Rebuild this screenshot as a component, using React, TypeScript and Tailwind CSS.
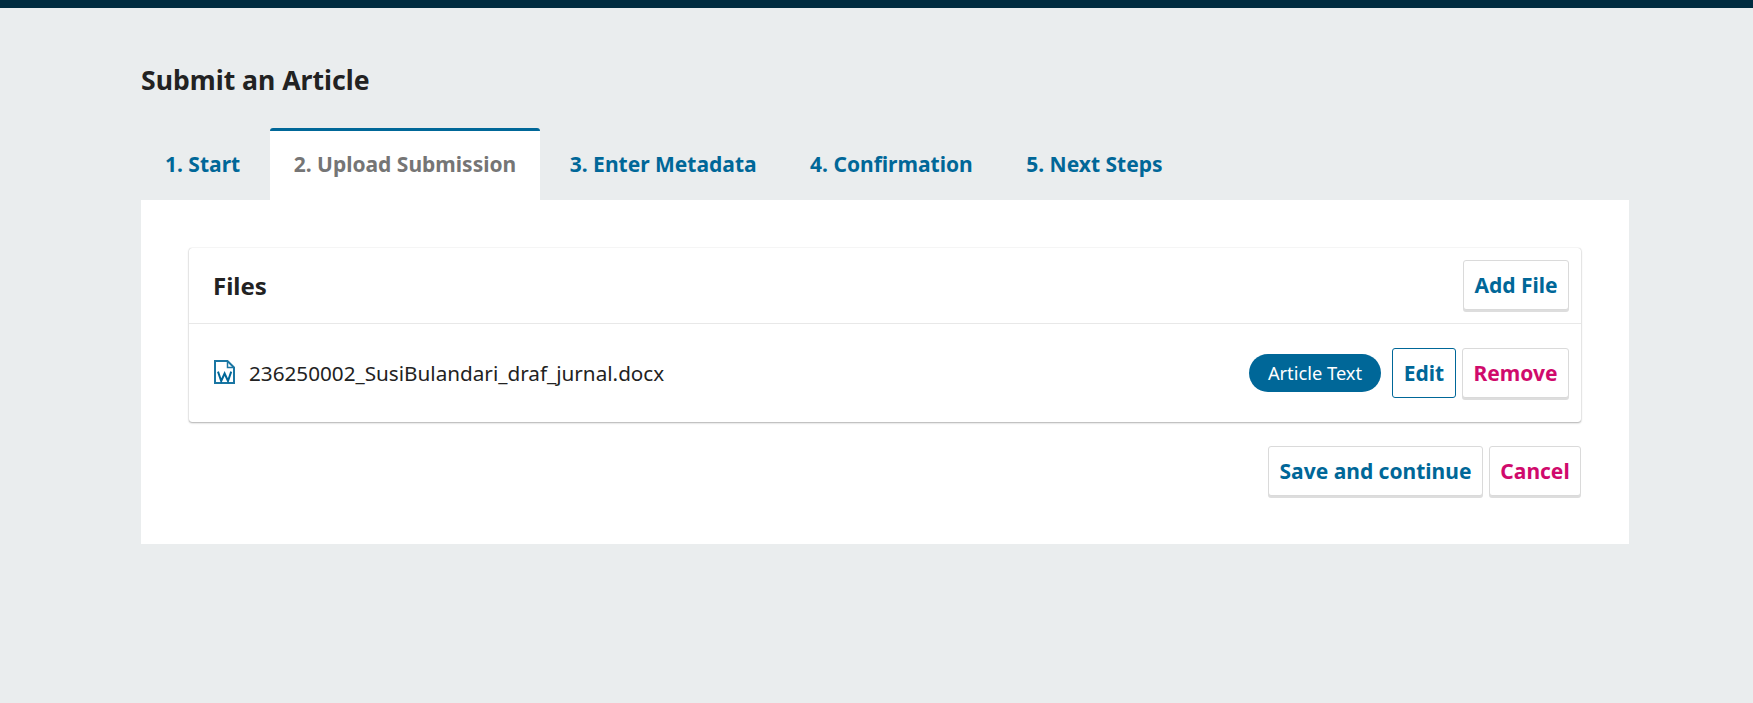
const font = { fontFamily: '"Noto Sans", sans-serif' };

function Tab({ label, active }: { label: string; active?: boolean }) {
  return (
    <div
      className={
        active
          ? "flex h-[72px] items-center rounded-t-[3px] border-t-[3px] border-[#006798] bg-white px-[24px] pb-[3px] text-[21px] leading-none font-bold text-[#757575]"
          : "flex h-[72px] items-center px-[24px] text-[21px] leading-none font-bold text-[#006798]"
      }
    >
      {label}
    </div>
  );
}

function Btn({ label, color, className }: { label: string; color: string; className: string }) {
  return (
    <button
      className={`flex h-[50px] items-center justify-center rounded-[3px] border border-[#dadada] bg-white text-[21px] font-bold shadow-[0_2px_0_#dddddd] ${color} ${className}`}
    >
      {label}
    </button>
  );
}

function WordIcon() {
  return (
    <svg width="24" height="26" viewBox="0 0 24 26" fill="none" className="shrink-0">
      <path d="M2 1 H14.5 L21 7.5 V23 H2 Z" stroke="#1a76a3" strokeWidth="2" strokeLinejoin="miter" />
      <path d="M14.5 1 V7.5 H21" stroke="#1a76a3" strokeWidth="1.5" />
      <path d="M5 11.7 L8.2 21 L11.6 13.5 L15 21 L18.2 11.7" stroke="#006798" strokeWidth="2" />
    </svg>
  );
}

export default function App() {
  return (
    <div style={font} className="min-h-[703px] bg-[#eaedee] text-[#222222]">
      <div className="h-2 bg-[#002c40]" />
      <div className="mx-[141px] w-[1488px] pt-[56px]">
        <h1 className="h-[32px] text-[26.6px] leading-[32px] font-bold text-[#222222]">Submit an Article</h1>
        <div className="mt-[32px] flex gap-[5.5px]">
          <Tab label="1. Start" />
          <Tab label="2. Upload Submission" active />
          <Tab label="3. Enter Metadata" />
          <Tab label="4. Confirmation" />
          <Tab label="5. Next Steps" />
        </div>
        <div className="h-[344px] bg-white px-12 pt-12">
          <div className="h-[174px] rounded-[3px] bg-white shadow-[0_0_1px_rgba(0,0,0,0.25),0_1px_2px_rgba(0,0,0,0.3)]">
            <div className="flex h-[76px] items-center justify-between border-b border-[#e8e8e8] pr-3 pb-[1px] pl-6">
              <div className="pt-[2px] text-[24px] font-bold text-[#222222]">Files</div>
              <Btn label="Add File" color="text-[#006798] pt-[1px]" className="w-[106px]" />
            </div>
            <div className="flex h-[98px] items-center pr-3 pl-6">
              <WordIcon />
              <div className="ml-[12px] flex-1 pt-[2px] text-[20.7px] text-[#222222]">236250002_SusiBulandari_draf_jurnal.docx</div>
              <div className="flex h-[38px] w-[132px] items-center justify-center rounded-full bg-[#006798] text-[18.3px] text-white">
                Article Text
              </div>
              <button className="ml-[11px] flex h-[50px] w-[64px] items-center justify-center rounded-[3px] border border-[#006798] bg-white pt-[1px] text-[21px] font-bold text-[#006798]">
                Edit
              </button>
              <Btn label="Remove" color="text-[#d00a6c] pt-[2px]" className="ml-[6px] w-[107px]" />
            </div>
          </div>
          <div className="mt-6 flex justify-end gap-[6px]">
            <Btn label="Save and continue" color="text-[#006798] pt-[2px]" className="w-[215px]" />
            <Btn label="Cancel" color="text-[#d00a6c] pt-[2px]" className="w-[92px]" />
          </div>
        </div>
      </div>
    </div>
  );
}
